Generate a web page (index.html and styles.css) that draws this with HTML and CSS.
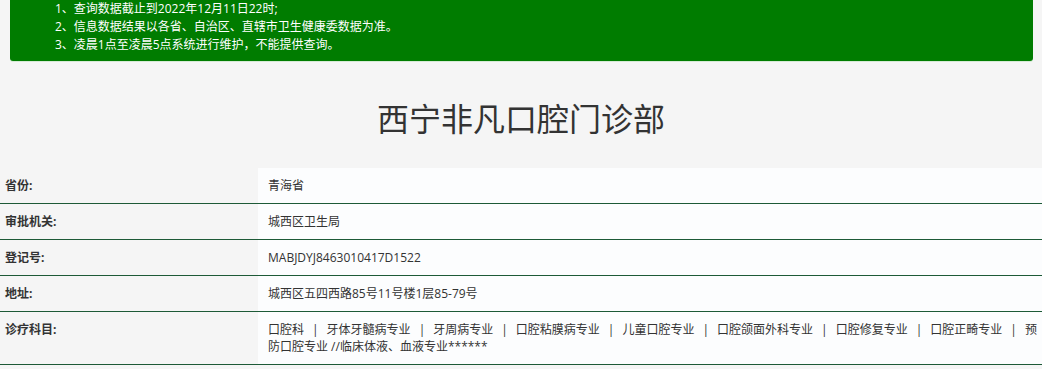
FILE: index.html
```html
<!DOCTYPE html>
<html lang="zh-CN">
<head>
<meta charset="utf-8">
<title>西宁非凡口腔门诊部</title>
<link rel="stylesheet" href="styles.css">
</head>
<body>
<div class="notice">
  <div class="notice-line">1、查询数据截止到2022年12月11日22时;</div>
  <div class="notice-line">2、信息数据结果以各省、自治区、直辖市卫生健康委数据为准。</div>
  <div class="notice-line">3、凌晨1点至凌晨5点系统进行维护，不能提供查询。</div>
</div>
<h1 class="title">西宁非凡口腔门诊部</h1>
<table class="info">
  <tr><th>省份:</th><td>青海省</td></tr>
  <tr><th>审批机关:</th><td>城西区卫生局</td></tr>
  <tr><th>登记号:</th><td>MABJDYJ8463010417D1522</td></tr>
  <tr><th>地址:</th><td>城西区五四西路85号11号楼1层85-79号</td></tr>
  <tr><th>诊疗科目:</th><td><span class="item">口腔科</span><span class="sep">|</span><span class="item">牙体牙髓病专业</span><span class="sep">|</span><span class="item">牙周病专业</span><span class="sep">|</span><span class="item">口腔粘膜病专业</span><span class="sep">|</span><span class="item">儿童口腔专业</span><span class="sep">|</span><span class="item">口腔颌面外科专业</span><span class="sep">|</span><span class="item">口腔修复专业</span><span class="sep">|</span><span class="item">口腔正畸专业</span><span class="sep">|</span><span class="item">预</span><span class="item">防口腔专业 //临床体液、血液专业******</span></td></tr>
</table>
</body>
</html>
```
FILE: styles.css
```css
html, body {
  margin: 0;
  padding: 0;
  background: #f5f5f5;
  font-family: "Open Sans", "Noto Sans CJK SC", sans-serif;
  color: #333;
}
.notice {
  margin: 0 9px 0 10px;
  padding: 0 0 7px 45px;
  background: #007c00;
  border-radius: 0 0 3px 3px;
  color: #fff;
  font-size: 12px;
  line-height: 18px;
  box-shadow: 0 1px 0 #d6ead6;
}
.title {
  margin: 34px 0 29px;
  text-align: center;
  font-family: "Noto Sans CJK SC", sans-serif;
  font-size: 32px;
  line-height: 44px;
  font-weight: normal;
  color: #333;
}
.info {
  width: 100%;
  border-collapse: collapse;
  font-size: 12px;
  line-height: 17px;
}
.info tr {
  border-bottom: 1px solid #1d5a37;
}
.info th {
  width: 253px;
  padding: 9px 0 9px 5px;
  text-align: left;
  vertical-align: top;
  font-weight: bold;
  background: #f5f5f5;
  color: #333;
}
.info td {
  padding: 9px 0 9px 10px;
  vertical-align: top;
  background: #fcfdfe;
  color: #333;
}
.sep {
  padding: 0 8px;
}
```
